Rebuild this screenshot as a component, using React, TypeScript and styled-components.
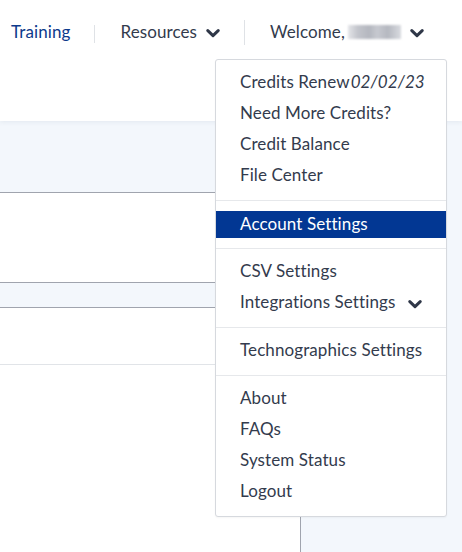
import React from 'react';
import styled, { createGlobalStyle } from 'styled-components';

const GlobalStyle = createGlobalStyle`
  html, body {
    margin: 0;
    padding: 0;
    background: #ffffff;
  }
  body {
    font-family: Lato, "Noto Sans", sans-serif;
    color: #333b4d;
    -webkit-font-smoothing: antialiased;
  }
`;

const Chevron: React.FC = () => (
  <ChevronSvg width="14" height="9" viewBox="0 0 14 9">
    <path d="M1.8 1.6 L7 6.6 L12.2 1.6" fill="none" stroke="#2f3748" strokeWidth="3" strokeLinecap="round" strokeLinejoin="round" />
  </ChevronSvg>
);

const App: React.FC = () => {
  return (
    <Page>
      <GlobalStyle />
      <Header>
        <NavLink>Training</NavLink>
        <Divider $h={18} />
        <NavItem>
          Resources
          <Chevron />
        </NavItem>
        <Divider $h={25} />
        <NavItem>
          Welcome,
          <BlurredName />
          <Chevron />
        </NavItem>
      </Header>
      <Main>
        <LeftPanel>
          <Row $h={71} $bg="#f3f7fc" $line="#a0a4ae" />
          <Row $h={89} $bg="#ffffff" $line="#a0a4ae" />
          <Row $h={24} $bg="#f3f7fc" $line="#a0a4ae" />
          <Row $h={56} $bg="#ffffff" $line="#e1e4e8" />
        </LeftPanel>
        <RightArea />
      </Main>
      <Menu>
        <Group>
          <Item>
            Credits Renew<em>02/02/23</em>
          </Item>
          <Item>Need More Credits?</Item>
          <Item>Credit Balance</Item>
          <Item>File Center</Item>
        </Group>
        <Group $tight>
          <ActiveItem>Account Settings</ActiveItem>
        </Group>
        <Group>
          <Item>CSV Settings</Item>
          <Item $split>
            Integrations Settings
            <Chevron />
          </Item>
        </Group>
        <Group>
          <Item>Technographics Settings</Item>
        </Group>
        <Group $last>
          <Item>About</Item>
          <Item>FAQs</Item>
          <Item>System Status</Item>
          <Item>Logout</Item>
        </Group>
      </Menu>
    </Page>
  );
};

export default App;

const Page = styled.div`
  position: relative;
  width: 462px;
  height: 552px;
  overflow: hidden;
  display: flex;
  flex-direction: column;
`;

const Header = styled.header`
  position: relative;
  z-index: 2;
  height: 121px;
  flex-shrink: 0;
  background: #ffffff;
  display: flex;
  align-items: flex-start;
  padding: 22px 0 0 11px;
  box-sizing: border-box;
  box-shadow: 0 1px 5px rgba(40, 60, 90, 0.08);
`;

const NavLink = styled.a`
  font-size: 17px;
  letter-spacing: 0.1px;
  line-height: 20px;
  color: #0d3a8c;
  margin-right: 24px;
`;

const NavItem = styled.div`
  display: flex;
  align-items: center;
  font-size: 17px;
  letter-spacing: 0.1px;
  line-height: 20px;
  color: #333b4d;
  padding: 0 24px 0 25px;
`;

const Divider = styled.span<{ $h: number }>`
  width: 1px;
  height: ${p => p.$h}px;
  margin-top: ${p => (p.$h === 18 ? 3 : -2)}px;
  background: #dfe2e6;
`;

const ChevronSvg = styled.svg`
  display: block;
  margin-left: 9px;
  margin-top: 2px;
  flex-shrink: 0;
`;

const BlurredName = styled.span`
  display: inline-block;
  width: 53px;
  height: 14px;
  margin-left: 3px;
  background: linear-gradient(90deg, #e4e5e9 0%, #c3c5cc 18%, #b4b7bf 40%, #c7c9d0 55%, #b5b8c0 75%, #d9dbe0 100%);
  filter: blur(1.2px);
`;

const Main = styled.div`
  flex: 1;
  display: flex;
  background: #f3f7fc;
`;

const LeftPanel = styled.div`
  width: 300px;
  background: #ffffff;
  border-right: 1px solid #a0a4ae;
  display: flex;
  flex-direction: column;
`;

const Row = styled.div<{ $h: number; $bg: string; $line: string }>`
  height: ${p => p.$h}px;
  background: ${p => p.$bg};
  border-bottom: 1px solid ${p => p.$line};
  flex-shrink: 0;
`;

const RightArea = styled.div`
  flex: 1;
`;

const Menu = styled.div`
  position: absolute;
  z-index: 5;
  left: 215px;
  top: 59px;
  width: 232px;
  box-sizing: border-box;
  background: #ffffff;
  border: 1px solid #d6d9de;
  border-radius: 3px;
  box-shadow: 0 1px 2px rgba(0, 0, 0, 0.04);
`;

const Group = styled.div<{ $tight?: boolean; $last?: boolean }>`
  padding: ${p => (p.$tight ? '10px 0 10px' : '6px 0 10px')};
  border-bottom: ${p => (p.$last ? 'none' : '1px solid #e6e8eb')};
`;

const Item = styled.div<{ $split?: boolean }>`
  display: flex;
  align-items: center;
  justify-content: ${p => (p.$split ? 'space-between' : 'flex-start')};
  height: 31px;
  padding: 0 24px 1px 24px;
  box-sizing: border-box;
  font-size: 17px;
  letter-spacing: 0.1px;
  color: #333b4d;
  white-space: nowrap;

  em {
    font-style: italic;
    margin-left: 1px;
  }

  svg {
    margin-top: 7px;
  }
`;

const ActiveItem = styled.div`
  display: flex;
  align-items: center;
  height: 27px;
  padding: 0 24px 2px;
  box-sizing: border-box;
  font-size: 17px;
  letter-spacing: 0.1px;
  color: #ffffff;
  background: #023793;
`;
